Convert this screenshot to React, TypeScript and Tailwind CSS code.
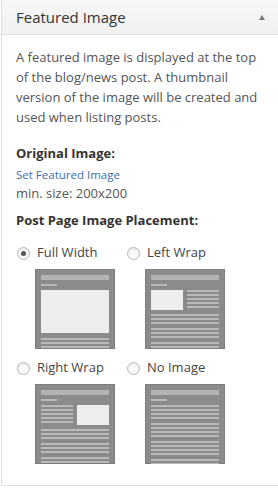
import React from "react";

type Layout = "full" | "left" | "right" | "none";

const Lines = ({ count }: { count: number }) => (
    <div className="flex flex-col gap-[2px]">
        {Array.from({ length: count }).map((_, i) => (
            <div key={i} className="h-[2px] bg-[#b9b9b9]" />
        ))}
    </div>
);

const Thumb = ({ layout }: { layout: Layout }) => (
    <div className="w-[80px] h-[80px] bg-[#8b8b8b] overflow-hidden px-[6px] pt-[6px] shadow-[inset_0_0_0_1px_#7d7d7d]">
        <div className="h-[5px] bg-[#b3b3b3]" />
        <div className="mt-[4px] w-[16px] h-[2px] bg-[#b9b9b9]" />
        <div className="mt-[4px]">
            {layout === "full" && (
                <>
                    <div className="h-[43px] bg-[#ededed]" />
                    <div className="mt-[5px]">
                        <Lines count={3} />
                    </div>
                </>
            )}
            {layout === "left" && (
                <>
                    <div className="flex gap-[4px]">
                        <div className="w-[32px] h-[20px] bg-[#ededed]" />
                        <div className="flex-1">
                            <Lines count={5} />
                        </div>
                    </div>
                    <div className="mt-[4px] flex flex-col gap-[4px]">
                        <Lines count={3} />
                        <Lines count={3} />
                        <Lines count={2} />
                    </div>
                </>
            )}
            {layout === "right" && (
                <>
                    <div className="flex gap-[4px]">
                        <div className="flex-1">
                            <Lines count={5} />
                        </div>
                        <div className="w-[32px] h-[20px] bg-[#ededed]" />
                    </div>
                    <div className="mt-[4px] flex flex-col gap-[4px]">
                        <Lines count={3} />
                        <Lines count={3} />
                        <Lines count={2} />
                    </div>
                </>
            )}
            {layout === "none" && (
                <div className="flex flex-col gap-[4px]">
                    <Lines count={4} />
                    <Lines count={4} />
                    <Lines count={4} />
                    <Lines count={3} />
                </div>
            )}
        </div>
    </div>
);

const Option = ({ label, layout, checked }: { label: string; layout: Layout; checked?: boolean }) => (
    <div className="w-[110px] flex flex-col">
        <label className="flex items-center h-[18px]">
            <span className="w-[13px] h-[13px] rounded-full border border-[#b4b9be] bg-[#fafafa] shadow-[inset_0_1px_2px_rgba(0,0,0,0.1)] flex items-center justify-center">
                {checked && <span className="w-[5px] h-[5px] rounded-full bg-[#555]" />}
            </span>
            <span className="ml-[7px] text-[13px] text-[#444]">{label}</span>
        </label>
        <div className="mt-[7px] ml-[18px]">
            <Thumb layout={layout} />
        </div>
    </div>
);

export default function App() {
    return (
        <div className="w-[278px] h-[493px] bg-white font-['Open_Sans',sans-serif] overflow-hidden">
            <div className="ml-[1px] border-l border-b border-[#dedede]">
                {/* header */}
                <div className="h-[35px] flex items-center justify-between pl-[14px] pr-[13px] bg-gradient-to-b from-[#f7f7f7] to-[#f1f1f1] border-b border-[#e0e0e0]">
                    <span className="text-[15px] text-[#333]">Featured Image</span>
                    <span className="w-0 h-0 border-l-[3.5px] border-r-[3.5px] border-b-[5px] border-l-transparent border-r-transparent border-b-[#777]" />
                </div>

                <div className="pl-[14px] pr-[10px] pt-[12px] pb-[21px] text-[#555]">
                    <p className="text-[13px] leading-[20px]">
                        A featured image is displayed at the top of the blog/news post. A thumbnail version of the image will be created and used when listing posts.
                    </p>

                    <div className="mt-[16px] text-[13px] leading-[20px] font-bold text-[#333]">Original Image:</div>
                    <div className="mt-[2px] text-[11.5px] leading-[19px] text-[#3b6ea8]">Set Featured Image</div>
                    <div className="text-[13px] leading-[19px]">min. size: 200x200</div>

                    <div className="mt-[7px] text-[13px] leading-[20px] font-bold text-[#333]">Post Page Image Placement:</div>

                    <div className="mt-[14px] pl-[1px] flex">
                        <Option label="Full Width" layout="full" checked />
                        <Option label="Left Wrap" layout="left" />
                    </div>
                    <div className="mt-[10px] pl-[1px] flex">
                        <Option label="Right Wrap" layout="right" />
                        <Option label="No Image" layout="none" />
                    </div>
                </div>
            </div>
        </div>
    );
}
